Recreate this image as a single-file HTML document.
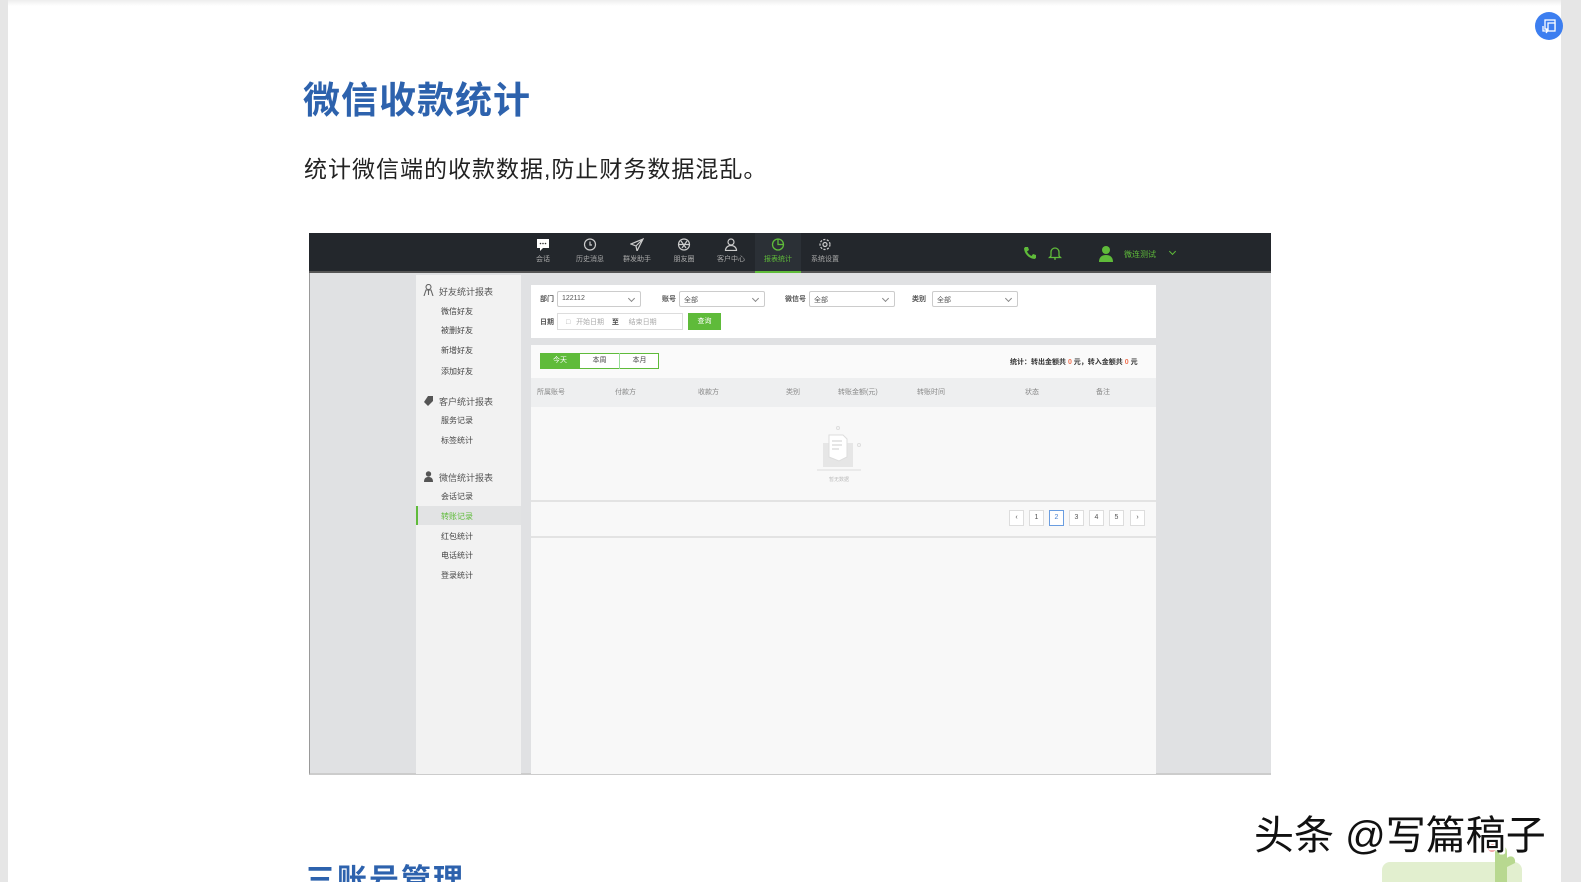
<!DOCTYPE html>
<html style="overflow:hidden;height:882px"><head><meta charset="utf-8"><style>
*{margin:0;padding:0;box-sizing:border-box}
html,body{width:1581px;height:882px;overflow:hidden}
body{background:#fff;font-family:"Liberation Sans","Noto Sans CJK SC",sans-serif}
#w{position:relative;width:1581px;height:882px;overflow:hidden}
.a{position:absolute}
.t{font-size:8px;color:#555;white-space:nowrap}
.sel{position:absolute;height:16px;border:1px solid #ccc;border-radius:2px;background:#fff;font-size:7px;color:#555;padding:3px 4px}
.sel:after{content:"";position:absolute;right:6px;top:4px;width:4px;height:4px;border-right:1px solid #888;border-bottom:1px solid #888;transform:rotate(45deg)}
.nav{position:absolute;top:233px;width:46px;height:40px;text-align:center;color:#aaa;font-size:7px}
.nav svg{display:block;margin:5px auto 3px}
.pg{position:absolute;top:510px;width:15px;height:16px;border:1px solid #ddd;background:#fff;font-size:7px;color:#555;text-align:center;line-height:14px}
.sm{position:absolute;left:441px;font-size:8px;color:#444}
</style></head><body><div id="w">
<div class="a" style="left:0;top:0;width:8px;height:882px;background:#e6e6e6"></div>
<div class="a" style="left:1561px;top:0;width:20px;height:882px;background:#e6e6e6"></div>
<div class="a" style="left:8px;top:0;width:1553px;height:6px;background:linear-gradient(#eee,#fff)"></div>
<div class="a" style="left:1535px;top:12px;width:28px;height:28px;border-radius:50%;background:#3c7ef0"></div>
<svg class="a" style="left:1541px;top:18px" width="16" height="16" viewBox="0 0 16 16" fill="none" stroke="#fff" stroke-width="1.3"><rect x="4" y="2" width="10" height="9"/><rect x="7" y="5" width="7" height="8" fill="#3c7ef0"/><path d="M2 8v5h4M5 11l1.5 2L5 15"/></svg>

<div class="a" style="left:303px;top:70px;font-size:37px;font-weight:bold;color:#2d62ad;letter-spacing:1px">微信收款统计</div>
<div class="a" style="left:304px;top:150px;font-size:23px;color:#222;letter-spacing:1px">统计微信端的收款数据,防止财务数据混乱。</div>

<div class="a" style="left:309px;top:233px;width:962px;height:542px;background:#e0e1e3;border-left:1px solid #999;border-bottom:2px solid #ccc"></div>
<div class="a" style="left:309px;top:233px;width:962px;height:40px;background:#23272c;border-bottom:2px solid #555"></div>
<div class="nav" style="left:520px;color:#aaa"><svg width="14" height="13"><rect x="1" y="1" width="12" height="9" fill="#fff"/><circle cx="4.5" cy="5.5" r=".8" fill="#333"/><circle cx="7" cy="5.5" r=".8" fill="#333"/><circle cx="9.5" cy="5.5" r=".8" fill="#333"/><path d="M4 10l0 3 3-3z" fill="#fff"/></svg>会话</div>
<div class="nav" style="left:567px"><svg width="14" height="13" fill="none" stroke="#ccc" stroke-width="1.2"><circle cx="7" cy="6.5" r="5.5"/><path d="M7 3.5v3.5h2"/></svg>历史消息</div>
<div class="nav" style="left:614px"><svg width="14" height="13" fill="none" stroke="#ccc" stroke-width="1.2"><path d="M13 1L1 6l5 2 1 5zM6 8l7-7"/></svg>群发助手</div>
<div class="nav" style="left:661px"><svg width="14" height="13" fill="none" stroke="#ccc" stroke-width="1.2"><circle cx="7" cy="6.5" r="5.5"/><path d="M4 3l5 7M10 3l-5 7M2 6.5h10"/></svg>朋友圈</div>
<div class="nav" style="left:708px"><svg width="14" height="13" fill="none" stroke="#ccc" stroke-width="1.2"><circle cx="7" cy="4" r="3"/><path d="M1.5 12.5c0-3 2.5-5 5.5-5s5.5 2 5.5 5z"/></svg>客户中心</div>
<div class="nav" style="left:755px;color:#5fbb3a;background:#2b3036;border-bottom:2px solid #5fbb3a"><svg width="14" height="13" fill="none" stroke="#5fbb3a" stroke-width="1.3"><circle cx="7" cy="6.5" r="5.5"/><path d="M7 1v5.5h5.5"/></svg>报表统计</div>
<div class="nav" style="left:802px"><svg width="14" height="13" fill="none" stroke="#ccc" stroke-width="1.2"><circle cx="7" cy="6.5" r="2"/><circle cx="7" cy="6.5" r="5" stroke-dasharray="2.2 1.4"/></svg>系统设置</div>
<svg class="a" style="left:1023px;top:246px" width="14" height="14" viewBox="0 0 14 14"><path d="M2 1l3 0 1 3-2 1.5c1 2 2.5 3.5 4.5 4.5L10 8l3 1v3l-1.5 1C6 12.5 1.5 8 1 2.5z" fill="#5fbb3a"/></svg>
<svg class="a" style="left:1048px;top:245px" width="14" height="16" fill="none" stroke="#5fbb3a" stroke-width="1.3"><path d="M3 11V7a4 4 0 018 0v4l1.5 1.5h-11zM6 14h2"/></svg>
<svg class="a" style="left:1098px;top:245px" width="16" height="17"><circle cx="8" cy="5" r="4" fill="#5fbb3a"/><path d="M1 17c0-5 3-7 7-7s7 2 7 7z" fill="#5fbb3a"/></svg>
<div class="a t" style="left:1124px;top:249px;color:#5fbb3a">微连测试</div>
<div class="a" style="left:1170px;top:249px;width:5px;height:5px;border-right:1px solid #5fbb3a;border-bottom:1px solid #5fbb3a;transform:rotate(45deg)"></div>

<div class="a" style="left:416px;top:275px;width:105px;height:499px;background:#f2f2f2"></div>
<svg class="a" style="left:423px;top:284px" width="11" height="12" fill="none" stroke="#666" stroke-width="1.1"><circle cx="5.5" cy="3" r="2.5"/><path d="M1 12l2-6h5l2 6M5.5 6v5"/></svg>
<div class="a t" style="left:439px;top:285px;font-size:9px">好友统计报表</div>
<div class="sm" style="top:306px">微信好友</div>
<div class="sm" style="top:325px">被删好友</div>
<div class="sm" style="top:345px">新增好友</div>
<div class="sm" style="top:366px">添加好友</div>
<svg class="a" style="left:423px;top:395px" width="11" height="11"><path d="M5 1h5v5l-5 5-4-4z" fill="#555"/></svg>
<div class="a t" style="left:439px;top:395px;font-size:9px">客户统计报表</div>
<div class="sm" style="top:415px">服务记录</div>
<div class="sm" style="top:435px">标签统计</div>
<svg class="a" style="left:423px;top:471px" width="11" height="11"><circle cx="5.5" cy="3" r="2.7" fill="#555"/><path d="M1 11c0-4 2-5 4.5-5s4.5 1 4.5 5z" fill="#555"/></svg>
<div class="a t" style="left:439px;top:471px;font-size:9px">微信统计报表</div>
<div class="sm" style="top:491px">会话记录</div>
<div class="a" style="left:416px;top:506px;width:105px;height:19px;background:#e2e3e4;border-left:2px solid #5fbb3a"></div>
<div class="sm" style="top:511px;color:#5fbb3a">转账记录</div>
<div class="sm" style="top:531px">红包统计</div>
<div class="sm" style="top:550px">电话统计</div>
<div class="sm" style="top:570px">登录统计</div>

<div class="a" style="left:531px;top:285px;width:625px;height:53px;background:#fff"></div>
<div class="a t" style="left:540px;top:294px;font-weight:bold;font-size:7px">部门</div>
<div class="sel" style="left:557px;top:291px;width:84px">122112</div>
<div class="a t" style="left:662px;top:294px;font-weight:bold;font-size:7px">账号</div>
<div class="sel" style="left:679px;top:291px;width:86px">全部</div>
<div class="a t" style="left:785px;top:294px;font-weight:bold;font-size:7px">微信号</div>
<div class="sel" style="left:809px;top:291px;width:86px">全部</div>
<div class="a t" style="left:912px;top:294px;font-weight:bold;font-size:7px">类别</div>
<div class="sel" style="left:932px;top:291px;width:86px">全部</div>
<div class="a t" style="left:540px;top:317px;font-weight:bold;font-size:7px">日期</div>
<div class="a" style="left:557px;top:313px;width:126px;height:17px;border:1px solid #ddd;font-size:7px;color:#aaa;padding:3px 8px;white-space:nowrap">□ &nbsp; 开始日期 &nbsp; &nbsp;<b style="color:#444">至</b> &nbsp; &nbsp; 结束日期</div>
<div class="a" style="left:688px;top:313px;width:33px;height:17px;background:#5fbb3a;color:#fff;font-size:7px;text-align:center;line-height:17px">查询</div>

<div class="a" style="left:531px;top:345px;width:625px;height:429px;background:#f8f8f8"></div>
<div class="a" style="left:531px;top:345px;width:625px;height:33px;background:#fafafa"></div>
<div class="a" style="left:540px;top:353px;width:119px;height:16px;border:1px solid #5fbb3a;background:#fff"></div>
<div class="a" style="left:540px;top:353px;width:40px;height:16px;background:#5fbb3a;color:#fff;font-size:7px;text-align:center;line-height:16px">今天</div>
<div class="a" style="left:580px;top:353px;width:40px;height:16px;border-right:1px solid #9d9;font-size:7px;text-align:center;line-height:16px;color:#444">本周</div>
<div class="a" style="left:620px;top:353px;width:39px;height:16px;font-size:7px;text-align:center;line-height:16px;color:#444">本月</div>
<div class="a t" style="left:1010px;top:357px;font-size:7px;font-weight:bold;color:#333">统计：转出金额共 <span style="color:#f07050">0</span> 元，转入金额共 <span style="color:#f07050">0</span> 元</div>
<div class="a" style="left:531px;top:378px;width:625px;height:29px;background:#eeeff0"></div>
<div class="a t" style="left:537px;top:387px;font-size:7px;color:#888">所属账号</div>
<div class="a t" style="left:615px;top:387px;font-size:7px;color:#888">付款方</div>
<div class="a t" style="left:698px;top:387px;font-size:7px;color:#888">收款方</div>
<div class="a t" style="left:786px;top:387px;font-size:7px;color:#888">类别</div>
<div class="a t" style="left:838px;top:387px;font-size:7px;color:#888">转账金额(元)</div>
<div class="a t" style="left:917px;top:387px;font-size:7px;color:#888">转账时间</div>
<div class="a t" style="left:1025px;top:387px;font-size:7px;color:#888">状态</div>
<div class="a t" style="left:1096px;top:387px;font-size:7px;color:#888">备注</div>
<svg class="a" style="left:815px;top:425px" width="48" height="50"><rect x="8" y="18" width="30" height="24" fill="#e6e6e6"/><path d="M14 10h14l4 4v18l-8 4-10-4z" fill="#fff" stroke="#ddd"/><path d="M17 16h10M17 20h10M17 24h7" stroke="#ccc"/><line x1="2" y1="45" x2="46" y2="45" stroke="#ddd"/><circle cx="23" cy="3" r="1.5" fill="none" stroke="#ddd"/><circle cx="44" cy="20" r="1.5" fill="none" stroke="#ddd"/></svg>
<div class="a t" style="left:829px;top:476px;font-size:5px;color:#bbb">暂无数据</div>
<div class="a" style="left:531px;top:500px;width:625px;height:2px;background:#e3e3e3"></div>
<div class="a" style="left:531px;top:536px;width:625px;height:2px;background:#e3e3e3"></div>
<div class="pg" style="left:1009px">‹</div>
<div class="pg" style="left:1029px">1</div>
<div class="pg" style="left:1049px;border-color:#6a9de0;color:#4a80d0">2</div>
<div class="pg" style="left:1069px">3</div>
<div class="pg" style="left:1089px">4</div>
<div class="pg" style="left:1109px">5</div>
<div class="pg" style="left:1130px">›</div>

<div class="a" style="left:305px;top:866px;font-size:30px;line-height:1;font-weight:bold;color:#2d62ad;letter-spacing:2px">三账号管理</div>
<div class="a" style="left:1382px;top:862px;width:140px;height:30px;border-radius:8px;background:#e2efcf"></div>
<svg class="a" style="left:1485px;top:838px" width="40" height="44"><circle cx="7" cy="10" r="4" fill="#f0a0a0"/><path d="M10 14c2-8 12-8 12 0v30h-12z" fill="#b8d890"/><path d="M22 20c3-3 9-2 8 5l-8 4z" fill="#b8d890"/></svg>
<div class="a" style="left:1254px;top:803px;font-size:40px;color:#111;text-shadow:2px 2px 0 #fff,-1px -1px 0 #fff;white-space:nowrap">头条 @写篇稿子</div>
</div></body></html>
